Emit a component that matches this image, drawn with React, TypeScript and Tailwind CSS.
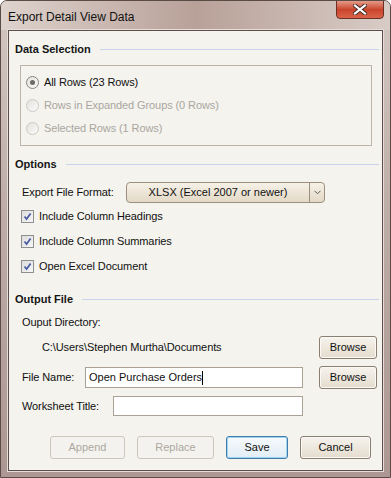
import React from 'react';

const font = { fontFamily: '"Liberation Sans", Arial, sans-serif' };

function SectionHeading({ title }: { title: string }) {
  return (
    <div className="flex items-center h-[14px] pl-[6px] pr-[3px]">
      <span className="text-[11px] font-bold text-[#151515] leading-[14px]">{title}</span>
      <div className="flex-1 h-px bg-[#c8d4ec] ml-[9px]" />
    </div>
  );
}

function Radio({ label, checked, disabled }: { label: string; checked?: boolean; disabled?: boolean }) {
  return (
    <div className="flex items-center h-[23px] pl-[5px]">
      <span
        className={
          'flex items-center justify-center w-[13px] h-[13px] rounded-full border bg-gradient-to-br from-[#e4e2de] to-[#fbfbfa] ' +
          (disabled ? 'border-[#cdc9c3]' : 'border-[#8a8580]')
        }
      >
        {checked && <span className="w-[5px] h-[5px] rounded-full bg-[#6e6a66]" />}
      </span>
      <span className={'ml-[5px] text-[11px] tracking-[-0.1px] ' + (disabled ? 'text-[#aaa69f]' : 'text-[#101010]')}>{label}</span>
    </div>
  );
}

function Check({ label }: { label: string }) {
  return (
    <div className="flex items-center h-[25px] pl-[12px]">
      <span className="flex items-center justify-center w-[13px] h-[13px] border border-[#8e8f8f] bg-gradient-to-br from-[#dcdcdc] to-[#f7f7f7]">
        <svg width="9" height="9" viewBox="0 0 9 9">
          <path d="M1.5 4.5 L3.6 7 L7.6 1.5" fill="none" stroke="#4a5ea6" strokeWidth="1.8" />
        </svg>
      </span>
      <span className="ml-[5px] text-[11px] tracking-[-0.1px] text-[#101010]">{label}</span>
    </div>
  );
}

function Button({ label, w, disabled, primary }: { label: string; w: string; disabled?: boolean; primary?: boolean }) {
  let cls = 'flex items-center justify-center h-[23px] rounded-[3px] border text-[11px] ';
  if (disabled) cls += 'border-[#cdc6bc] bg-[#f4f2ee] text-[#aca8a0] ';
  else if (primary) cls += 'border-[#3d7cad] bg-gradient-to-b from-[#f5fafd] to-[#e2edf5] text-[#111] shadow-[inset_0_0_0_1px_#9fd4f0] ';
  else cls += 'border-[#8a7e70] bg-gradient-to-b from-[#f6f3ed] to-[#e4dccd] text-[#111] shadow-[inset_0_0_0_1px_#fbf9f5] ';
  return <div className={cls + w}>{label}</div>;
}

export default function App() {
  return (
    <div style={font} className="w-[391px] h-[478px] rounded-t-[7px] border border-[#5b4b47] bg-gradient-to-b from-[#d3c7c1] via-[#bcaaa4] to-[#ad9792] flex flex-col overflow-hidden">
      <div className="flex h-[29px] bg-gradient-to-r from-[#ded3cd] via-[#b8a199] to-[#d8ccc6]">
        <span className="ml-[7px] mt-[7px] text-[12px] text-[#111]">Export Detail View Data</span>
        <div className="ml-auto mr-[6px] w-[48px] h-[19px] -mt-px rounded-b-[4px] border border-[#6b3024] bg-gradient-to-b from-[#e49a88] via-[#c9442b] to-[#d9634a] flex items-center justify-center">
          <svg width="14" height="11" viewBox="0 0 14 11">
            <path d="M2 1.5 L12 9.5 M12 1.5 L2 9.5" stroke="#3c2a28" strokeWidth="4" strokeLinecap="square" />
            <path d="M2 1.5 L12 9.5 M12 1.5 L2 9.5" stroke="#ffffff" strokeWidth="2.2" strokeLinecap="square" />
          </svg>
        </div>
      </div>

      <div className="mx-[7px] mb-[6px] flex-1 border border-[#5e4e4a] shadow-[0_0_0_1px_#e6dcd8] bg-[#f4f3ee] flex flex-col">
        <div className="mt-[11px]">
          <SectionHeading title="Data Selection" />
        </div>
        <div className="mt-[9px] ml-[11px] w-[352px] border border-[#bcb3a9] pt-[5px] pb-[5px]">
          <Radio label="All Rows (23 Rows)" checked />
          <Radio label="Rows in Expanded Groups (0 Rows)" disabled />
          <Radio label="Selected Rows (1 Rows)" disabled />
        </div>

        <div className="mt-[11px]">
          <SectionHeading title="Options" />
        </div>
        <div className="mt-[11px] flex items-center h-[21px] pl-[13px]">
          <span className="text-[11px] tracking-[-0.1px] text-[#101010] w-[104px]">Export File Format:</span>
          <div className="flex w-[199px] h-[21px] rounded-[4px] border border-[#9c8f7e] bg-gradient-to-b from-[#f6f1e8] to-[#e3d9c6]">
            <div className="flex-1 flex items-center justify-center text-[11px] text-[#111]">XLSX (Excel 2007 or newer)</div>
            <div className="w-[15px] border-l border-[#9c8f7e] flex items-center justify-center">
              <svg width="7" height="5" viewBox="0 0 7 5">
                <path d="M0.5 0.8 L3.5 3.8 L6.5 0.8" fill="none" stroke="#555" strokeWidth="1" />
              </svg>
            </div>
          </div>
        </div>
        <div className="mt-px">
          <Check label="Include Column Headings" />
          <Check label="Include Column Summaries" />
          <Check label="Open Excel Document" />
        </div>

        <div className="mt-[13px]">
          <SectionHeading title="Output File" />
        </div>
        <div className="mt-[6px] flex items-center h-[20px] pl-[13px] text-[11px] tracking-[-0.1px] text-[#101010]">Ouput Directory:</div>
        <div className="mt-[4px] flex items-center h-[23px]">
          <span className="ml-[33px] text-[11px] tracking-[-0.1px] text-[#101010]">C:\Users\Stephen Murtha\Documents</span>
          <div className="ml-auto mr-[5px]">
            <Button label="Browse" w="w-[58px]" />
          </div>
        </div>
        <div className="mt-[7px] flex items-center h-[23px]">
          <span className="ml-[13px] w-[63px] text-[11px] tracking-[-0.1px] text-[#101010]">File Name:</span>
          <div className="flex items-center w-[218px] h-[21px] border border-[#aaa195] bg-white pl-[3px] text-[11px] text-[#111]">
            Open Purchase Orders<span className="w-px h-[14px] bg-black" />
          </div>
          <div className="ml-auto mr-[5px]">
            <Button label="Browse" w="w-[58px]" />
          </div>
        </div>
        <div className="mt-[7px] flex items-center h-[20px]">
          <span className="ml-[13px] w-[91px] text-[11px] tracking-[-0.1px] text-[#101010]">Worksheet Title:</span>
          <div className="w-[190px] h-[20px] border border-[#aaa195] bg-white" />
        </div>

        <div className="mt-[20px] flex justify-end gap-[12px] mr-[11px]">
          <Button label="Append" w="w-[75px]" disabled />
          <Button label="Replace" w="w-[77px]" disabled />
          <Button label="Save" w="w-[62px]" primary />
          <Button label="Cancel" w="w-[71px]" />
        </div>
      </div>
    </div>
  );
}
